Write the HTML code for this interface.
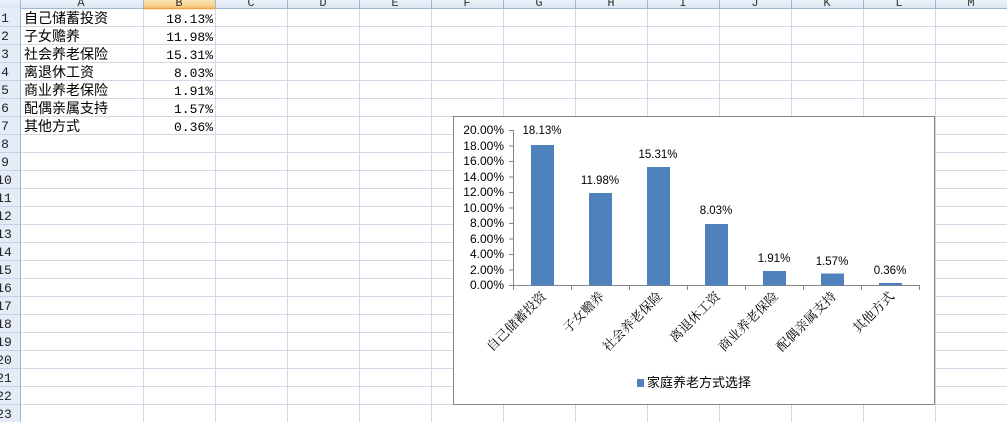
<!DOCTYPE html>
<html><head><meta charset="utf-8"><style>
body{margin:0;width:1007px;height:422px;overflow:hidden;background:#fff;position:relative;font-family:"Liberation Mono","Noto Sans CJK SC",monospace}
.a{position:absolute}
</style></head><body>
<svg class="a" style="left:0;top:0" width="1007" height="422">
<defs><linearGradient id="h" x1="0" y1="0" x2="0" y2="1"><stop offset="0" stop-color="#eef3fa"/><stop offset="1" stop-color="#dbe4f1"/></linearGradient>
<linearGradient id="o" x1="0" y1="0" x2="0" y2="1"><stop offset="0" stop-color="#fbe3b5"/><stop offset="1" stop-color="#f7c97c"/></linearGradient></defs>
<g stroke="#d0d7e5" stroke-width="1">
<line x1="20" y1="26.5" x2="1007" y2="26.5"/><line x1="20" y1="44.5" x2="1007" y2="44.5"/><line x1="20" y1="62.5" x2="1007" y2="62.5"/><line x1="20" y1="80.5" x2="1007" y2="80.5"/><line x1="20" y1="98.5" x2="1007" y2="98.5"/><line x1="20" y1="116.5" x2="1007" y2="116.5"/><line x1="20" y1="134.5" x2="1007" y2="134.5"/><line x1="20" y1="152.5" x2="1007" y2="152.5"/><line x1="20" y1="170.5" x2="1007" y2="170.5"/><line x1="20" y1="188.5" x2="1007" y2="188.5"/><line x1="20" y1="206.5" x2="1007" y2="206.5"/><line x1="20" y1="224.5" x2="1007" y2="224.5"/><line x1="20" y1="242.5" x2="1007" y2="242.5"/><line x1="20" y1="260.5" x2="1007" y2="260.5"/><line x1="20" y1="278.5" x2="1007" y2="278.5"/><line x1="20" y1="296.5" x2="1007" y2="296.5"/><line x1="20" y1="314.5" x2="1007" y2="314.5"/><line x1="20" y1="332.5" x2="1007" y2="332.5"/><line x1="20" y1="350.5" x2="1007" y2="350.5"/><line x1="20" y1="368.5" x2="1007" y2="368.5"/><line x1="20" y1="386.5" x2="1007" y2="386.5"/><line x1="20" y1="404.5" x2="1007" y2="404.5"/>
<line x1="143.5" y1="8" x2="143.5" y2="422"/><line x1="215.5" y1="8" x2="215.5" y2="422"/><line x1="287.5" y1="8" x2="287.5" y2="422"/><line x1="359.5" y1="8" x2="359.5" y2="422"/><line x1="431.5" y1="8" x2="431.5" y2="422"/><line x1="503.5" y1="8" x2="503.5" y2="422"/><line x1="575.5" y1="8" x2="575.5" y2="422"/><line x1="647.5" y1="8" x2="647.5" y2="422"/><line x1="719.5" y1="8" x2="719.5" y2="422"/><line x1="791.5" y1="8" x2="791.5" y2="422"/><line x1="863.5" y1="8" x2="863.5" y2="422"/><line x1="935.5" y1="8" x2="935.5" y2="422"/>
</g>
<rect x="0" y="0" width="1007" height="8" fill="url(#h)"/>
<rect x="143" y="0" width="72" height="8" fill="url(#o)"/>
<line x1="0" y1="8.5" x2="1007" y2="8.5" stroke="#9eb6ce"/>
<line x1="143" y1="8.5" x2="215" y2="8.5" stroke="#f2a33a" stroke-width="1.5"/>
<rect x="0" y="8" width="20" height="414" fill="#e4ecf7"/>
<line x1="20.5" y1="0" x2="20.5" y2="422" stroke="#9eb6ce"/>
<g stroke="#9eb6ce"><line x1="143.5" y1="0" x2="143.5" y2="8"/><line x1="215.5" y1="0" x2="215.5" y2="8"/><line x1="287.5" y1="0" x2="287.5" y2="8"/><line x1="359.5" y1="0" x2="359.5" y2="8"/><line x1="431.5" y1="0" x2="431.5" y2="8"/><line x1="503.5" y1="0" x2="503.5" y2="8"/><line x1="575.5" y1="0" x2="575.5" y2="8"/><line x1="647.5" y1="0" x2="647.5" y2="8"/><line x1="719.5" y1="0" x2="719.5" y2="8"/><line x1="791.5" y1="0" x2="791.5" y2="8"/><line x1="863.5" y1="0" x2="863.5" y2="8"/><line x1="935.5" y1="0" x2="935.5" y2="8"/></g>
<g stroke="#c5d3e5"><line x1="0" y1="26.5" x2="20" y2="26.5"/><line x1="0" y1="44.5" x2="20" y2="44.5"/><line x1="0" y1="62.5" x2="20" y2="62.5"/><line x1="0" y1="80.5" x2="20" y2="80.5"/><line x1="0" y1="98.5" x2="20" y2="98.5"/><line x1="0" y1="116.5" x2="20" y2="116.5"/><line x1="0" y1="134.5" x2="20" y2="134.5"/><line x1="0" y1="152.5" x2="20" y2="152.5"/><line x1="0" y1="170.5" x2="20" y2="170.5"/><line x1="0" y1="188.5" x2="20" y2="188.5"/><line x1="0" y1="206.5" x2="20" y2="206.5"/><line x1="0" y1="224.5" x2="20" y2="224.5"/><line x1="0" y1="242.5" x2="20" y2="242.5"/><line x1="0" y1="260.5" x2="20" y2="260.5"/><line x1="0" y1="278.5" x2="20" y2="278.5"/><line x1="0" y1="296.5" x2="20" y2="296.5"/><line x1="0" y1="314.5" x2="20" y2="314.5"/><line x1="0" y1="332.5" x2="20" y2="332.5"/><line x1="0" y1="350.5" x2="20" y2="350.5"/><line x1="0" y1="368.5" x2="20" y2="368.5"/><line x1="0" y1="386.5" x2="20" y2="386.5"/><line x1="0" y1="404.5" x2="20" y2="404.5"/></g>
<g font-family="Liberation Mono, monospace" font-size="12" fill="#333" text-anchor="middle">
<text x="81" y="6">A</text><text x="179" y="6">B</text><text x="251" y="6">C</text><text x="323" y="6">D</text><text x="395" y="6">E</text><text x="467" y="6">F</text><text x="539" y="6">G</text><text x="611" y="6">H</text><text x="683" y="6">I</text><text x="755" y="6">J</text><text x="827" y="6">K</text><text x="899" y="6">L</text><text x="971" y="6">M</text>
</g>
<g font-family="Liberation Mono, monospace" font-size="13" fill="#222" text-anchor="middle">
<text x="5" y="22">1</text><text x="5" y="40">2</text><text x="5" y="58">3</text><text x="5" y="76">4</text><text x="5" y="94">5</text><text x="5" y="112">6</text><text x="5" y="130">7</text><text x="5" y="148">8</text><text x="5" y="166">9</text><text x="4" y="184">10</text><text x="4" y="202">11</text><text x="4" y="220">12</text><text x="4" y="238">13</text><text x="4" y="256">14</text><text x="4" y="274">15</text><text x="4" y="292">16</text><text x="4" y="310">17</text><text x="4" y="328">18</text><text x="4" y="346">19</text><text x="4" y="364">20</text><text x="4" y="382">21</text><text x="4" y="400">22</text><text x="4" y="418">23</text>
</g>
<g font-family="Liberation Mono, Noto Sans CJK SC, monospace" font-size="14" fill="#000">
<text x="24" y="23">自己储蓄投资</text><text x="24" y="41">子女赡养</text><text x="24" y="59">社会养老保险</text><text x="24" y="77">离退休工资</text><text x="24" y="95">商业养老保险</text><text x="24" y="113">配偶亲属支持</text><text x="24" y="131">其他方式</text>
</g>
<g font-family="Liberation Mono, monospace" font-size="13" fill="#000" text-anchor="end">
<text x="213" y="23">18.13%</text><text x="213" y="41">11.98%</text><text x="213" y="59">15.31%</text><text x="213" y="77">8.03%</text><text x="213" y="95">1.91%</text><text x="213" y="113">1.57%</text><text x="213" y="131">0.36%</text>
</g>
<rect x="453.5" y="116.5" width="481" height="288" fill="#fff" stroke="#868686"/>
<g stroke="#868686">
<line x1="513.5" y1="130" x2="513.5" y2="285"/><line x1="513" y1="285.5" x2="919" y2="285.5"/>
<line x1="509" y1="130.5" x2="513" y2="130.5"/><line x1="509" y1="146" x2="513" y2="146"/><line x1="509" y1="161.5" x2="513" y2="161.5"/><line x1="509" y1="177" x2="513" y2="177"/><line x1="509" y1="192.5" x2="513" y2="192.5"/><line x1="509" y1="208" x2="513" y2="208"/><line x1="509" y1="223.5" x2="513" y2="223.5"/><line x1="509" y1="239" x2="513" y2="239"/><line x1="509" y1="254.5" x2="513" y2="254.5"/><line x1="509" y1="270" x2="513" y2="270"/><line x1="509" y1="285.5" x2="513" y2="285.5"/>
<line x1="513.5" y1="285" x2="513.5" y2="290"/><line x1="571.5" y1="285" x2="571.5" y2="290"/><line x1="629.5" y1="285" x2="629.5" y2="290"/><line x1="687.5" y1="285" x2="687.5" y2="290"/><line x1="745.5" y1="285" x2="745.5" y2="290"/><line x1="803.5" y1="285" x2="803.5" y2="290"/><line x1="861.5" y1="285" x2="861.5" y2="290"/><line x1="919.5" y1="285" x2="919.5" y2="290"/>
</g>
<g font-family="Liberation Sans, sans-serif" font-size="12" fill="#000" text-anchor="end">
<text x="504" y="134">20.00%</text><text x="504" y="150">18.00%</text><text x="504" y="165">16.00%</text><text x="504" y="181">14.00%</text><text x="504" y="196">12.00%</text><text x="504" y="212">10.00%</text><text x="504" y="227">8.00%</text><text x="504" y="243">6.00%</text><text x="504" y="258">4.00%</text><text x="504" y="274">2.00%</text><text x="504" y="289">0.00%</text>
</g>
<g fill="#4f81bd">
<rect x="531" y="145" width="23" height="140.5"/><rect x="589" y="193" width="23" height="92.5"/><rect x="647" y="167" width="23" height="118.5"/><rect x="705" y="224" width="23" height="61.5"/><rect x="763" y="271" width="23" height="14.5"/><rect x="821" y="273.5" width="23" height="12"/><rect x="879" y="283" width="23" height="2.5"/>
</g>
<g font-family="Liberation Sans, sans-serif" font-size="11.5" fill="#000" text-anchor="middle">
<text x="542" y="134">18.13%</text><text x="600" y="184">11.98%</text><text x="658" y="158">15.31%</text><text x="716" y="214">8.03%</text><text x="774" y="262">1.91%</text><text x="832" y="265">1.57%</text><text x="890" y="274">0.36%</text>
</g>
<g font-family="Noto Serif CJK SC, serif" font-size="13" fill="#000" text-anchor="end">
<text transform="translate(547,297) rotate(-45)">自己储蓄投资</text>
<text transform="translate(605,297) rotate(-45)">子女赡养</text>
<text transform="translate(663,297) rotate(-45)">社会养老保险</text>
<text transform="translate(721,297) rotate(-45)">离退休工资</text>
<text transform="translate(779,297) rotate(-45)">商业养老保险</text>
<text transform="translate(837,297) rotate(-45)">配偶亲属支持</text>
<text transform="translate(895,297) rotate(-45)">其他方式</text>
</g>
<rect x="637" y="379" width="7" height="8" fill="#4f81bd"/>
<text x="647" y="387" font-family="Liberation Sans, Noto Sans CJK SC, sans-serif" font-size="13" fill="#000">家庭养老方式选择</text>
</svg>
</body></html>
